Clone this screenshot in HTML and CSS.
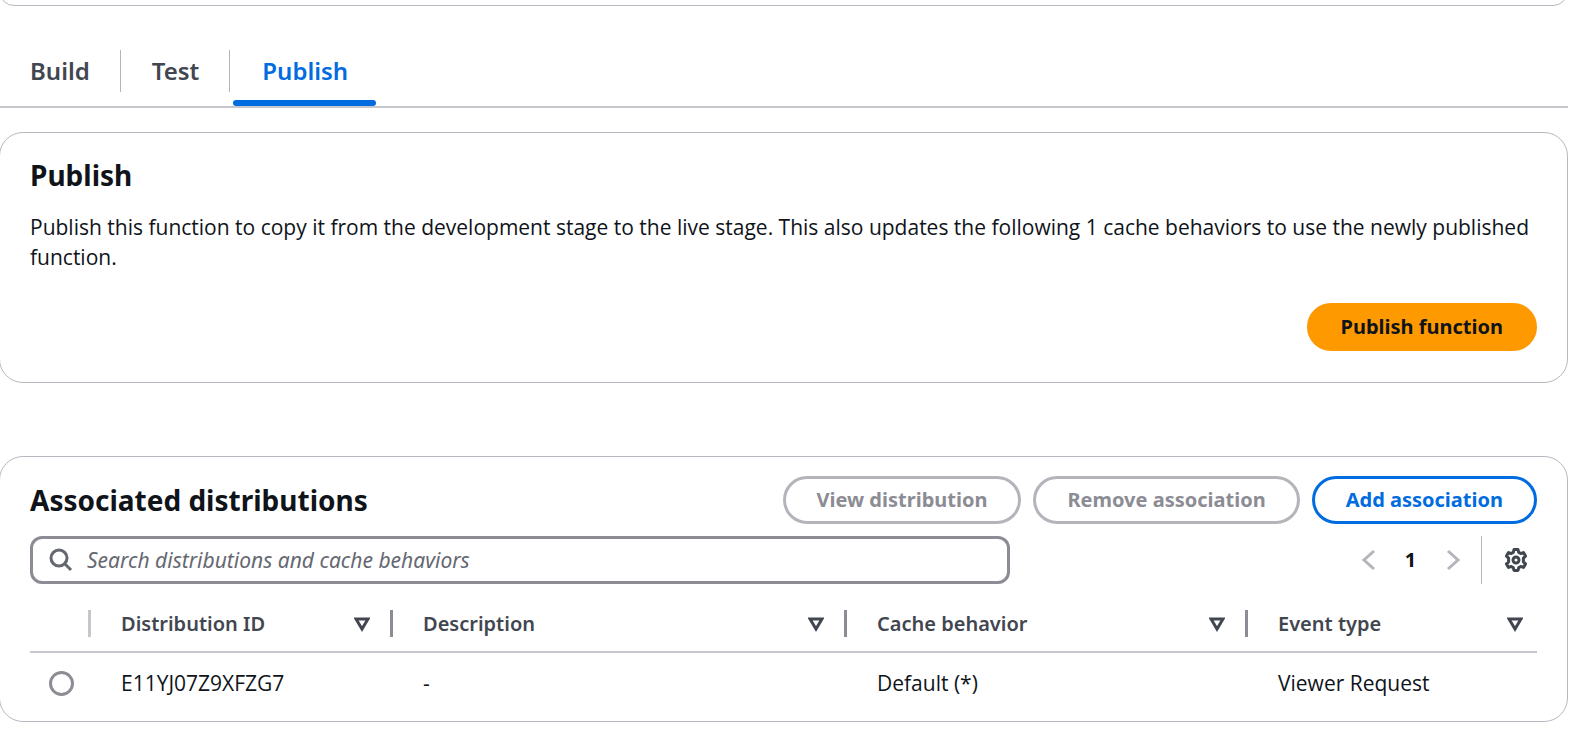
FILE: index.html
```html
<!DOCTYPE html>
<html lang="en">
<head>
<meta charset="utf-8">
<title>Publish function</title>
<link rel="stylesheet" href="styles.css">
</head>
<body>
<main class="page">
  <div class="card card-end"></div>
  <nav class="tabs" role="tablist">
    <button class="tab" role="tab" aria-selected="false">Build</button>
    <button class="tab" role="tab" aria-selected="false">Test</button>
    <button class="tab tab-active" role="tab" aria-selected="true">Publish</button>
  </nav>

  <section class="card publish">
    <h2 class="title">Publish</h2>
    <p class="text">Publish this function to copy it from the development stage to the live stage. This also updates the following 1 cache behaviors to use the newly published function.</p>
    <div class="actions"><button class="btn btn-primary">Publish function</button></div>
  </section>

  <section class="card distributions">
    <header class="head">
      <h2 class="title">Associated distributions</h2>
      <div class="actions">
        <button class="btn" disabled>View distribution</button>
        <button class="btn" disabled>Remove association</button>
        <button class="btn">Add association</button>
      </div>
    </header>
    <div class="tools">
      <label class="search">
        <svg class="icon" viewBox="0 0 24 24" aria-hidden="true"><circle cx="10" cy="10" r="8"/><path d="m16 16 6 6"/></svg>
        <input class="search-input" type="search" aria-label="Search distributions and cache behaviors" placeholder="Search distributions and cache behaviors">
      </label>
      <div class="pager">
        <button class="page-btn" aria-label="Previous page" disabled><svg class="icon" viewBox="0 0 24 24"><path d="m18 3-10 9 10 9"/></svg></button>
        <button class="page-btn page-current">1</button>
        <button class="page-btn" aria-label="Next page" disabled><svg class="icon" viewBox="0 0 24 24"><path d="m6 3 10 9-10 9"/></svg></button>
        <button class="page-btn settings" aria-label="Preferences"><svg class="icon gear" viewBox="0 0 24 24"><path d="M10 1.500h4l.7 2.900 2 1.100 2.800-.9 2 3.500-2.100 2v3.800l2.100 2-2 3.500-2.800-.9-2 1.100-.7 2.900h-4l-.7-2.900-2-1.100-2.800.9-2-3.500 2.100-2v-3.800l-2.100-2 2-3.500 2.800.9 2-1.100z"/><circle cx="12" cy="12" r="3"/></svg></button>
      </div>
    </div>
    <table class="table">
      <colgroup><col class="c-pick"><col class="c-id"><col class="c-desc"><col class="c-cache"><col></colgroup>
      <thead>
        <tr>
          <th class="pick" aria-label="Selection"><div class="cell"></div></th>
          <th><div class="cell">Distribution ID<svg class="sort" viewBox="0 0 16 16"><path d="M2 3h12L8 13z"/></svg></div></th>
          <th><div class="cell">Description<svg class="sort" viewBox="0 0 16 16"><path d="M2 3h12L8 13z"/></svg></div></th>
          <th><div class="cell">Cache behavior<svg class="sort" viewBox="0 0 16 16"><path d="M2 3h12L8 13z"/></svg></div></th>
          <th><div class="cell">Event type<svg class="sort" viewBox="0 0 16 16"><path d="M2 3h12L8 13z"/></svg></div></th>
        </tr>
      </thead>
      <tbody>
        <tr>
          <td class="pick"><input class="radio" type="radio" name="dist" aria-label="Select E11YJ07Z9XFZG7"></td>
          <td>E11YJ07Z9XFZG7</td>
          <td>-</td>
          <td>Default (*)</td>
          <td>Viewer Request</td>
        </tr>
      </tbody>
    </table>
  </section>
</main>
</body>
</html>
```

FILE: styles.css
```css
* { box-sizing: border-box; }
body {
  margin: 0;
  background: #fff;
  color: #0f141a;
  font: 20px/30px "Noto Sans", "Open Sans", sans-serif;
}
button, input { font: inherit; color: inherit; }
.page { padding-right: 6px; margin-left: -1px; overflow: hidden; }
.card { border: 1px solid #b8b8c0; border-radius: 24px; padding: 0 30px; }
.card-end { height: 30px; margin-top: -24px; }

.tabs { display: flex; height: 102px; padding-top: 44px; border-bottom: 2px solid #c6c6cd; }
.tab {
  position: relative;
  padding: 0 31px 14px;
  border: 0;
  background: none;
  color: #424650;
  font-size: 24px;
  font-weight: 600;
}
.tab:not(:last-child)::after {
  content: "";
  position: absolute;
  right: 0;
  top: 0;
  width: 1px;
  height: 42px;
  background: #b4b4bb;
}
.tab-active { padding: 0 28px 14px 32px; color: #006ce0; }
.tab-active::before {
  content: "";
  position: absolute;
  left: 3px;
  right: 0;
  bottom: 0;
  height: 6px;
  border-radius: 3px;
  background: #006ce0;
}

.publish { margin-top: 24px; padding-top: 24px; padding-bottom: 31px; }
.title { margin: 0; font-size: 28px; line-height: 36px; font-weight: 700; }
.text { margin: 19px 0 31px; font-family: "Open Sans", "Noto Sans", sans-serif; font-size: 21px; }
.actions { display: flex; justify-content: flex-end; gap: 12px; }
.btn {
  height: 48px;
  padding: 0 31px;
  border: 3px solid #006ce0;
  border-radius: 24px;
  background: #fff;
  color: #006ce0;
  font-weight: 700;
  white-space: nowrap;
}
.btn:disabled { border-color: #b4b4bb; color: #8c8c94; }
.btn-primary { border-color: #f90; background: #f90; color: #0f141a; }

.distributions { margin-top: 73px; padding-top: 19px; padding-bottom: 8px; }
.head { display: flex; justify-content: space-between; align-items: center; }
.tools { display: flex; justify-content: space-between; margin-top: 12px; }
.search {
  display: flex;
  align-items: center;
  gap: 14px;
  width: 65%;
  height: 48px;
  padding: 0 16px;
  border: 3px solid #8c8c94;
  border-radius: 12px;
  color: #656871;
}
.icon { display: block; width: 24px; height: 24px; flex: none; fill: none; stroke: currentColor; stroke-width: 3; }
.gear { stroke-linejoin: round; }
.search-input { flex: 1; min-width: 0; padding: 0; border: 0; outline: 0; background: none; font-size: 21px; }
.search-input::placeholder { color: #656871; font-style: italic; opacity: 1; }
.pager { display: flex; align-items: center; }
.page-btn { display: grid; place-items: center; width: 43px; height: 48px; padding: 0; border: 0; background: none; color: #424650; }
.page-btn:disabled { color: #b4b4bb; }
.page-current { color: #0f141a; font-weight: 700; }
.settings { width: 56px; margin-left: 6px; padding-left: 12px; border-left: 1px solid #b4b4bb; }

.table { width: 100%; margin-top: 12px; table-layout: fixed; border-collapse: collapse; text-align: left; }
.c-pick { width: 61px; }
.c-id { width: 302px; }
.c-desc { width: 454px; }
.c-cache { width: 401px; }
.table th { padding: 14px 0; border-bottom: 2px solid #c6c6cd; color: #424650; font-weight: 600; }
.table td { height: 61px; padding: 0 0 0 30px; font-family: "Open Sans", "Noto Sans", sans-serif; font-size: 21px; }
.cell {
  display: flex;
  align-items: center;
  justify-content: space-between;
  height: 27px;
  padding: 0 20px 0 30px;
  border-right: 3px solid #8c8c94;
}
.pick .cell { border-color: #c6c6cd; }
th:last-child .cell { padding-right: 14px; border: 0; }
.sort { width: 16px; height: 16px; fill: none; stroke: currentColor; stroke-width: 3; }
.table .pick { padding-left: 0; }
.radio {
  display: block;
  appearance: none;
  width: 25px;
  height: 25px;
  margin: 0 0 0 19px;
  border: 3px solid #8c8c94;
  border-radius: 50%;
  background: #fff;
}
```
